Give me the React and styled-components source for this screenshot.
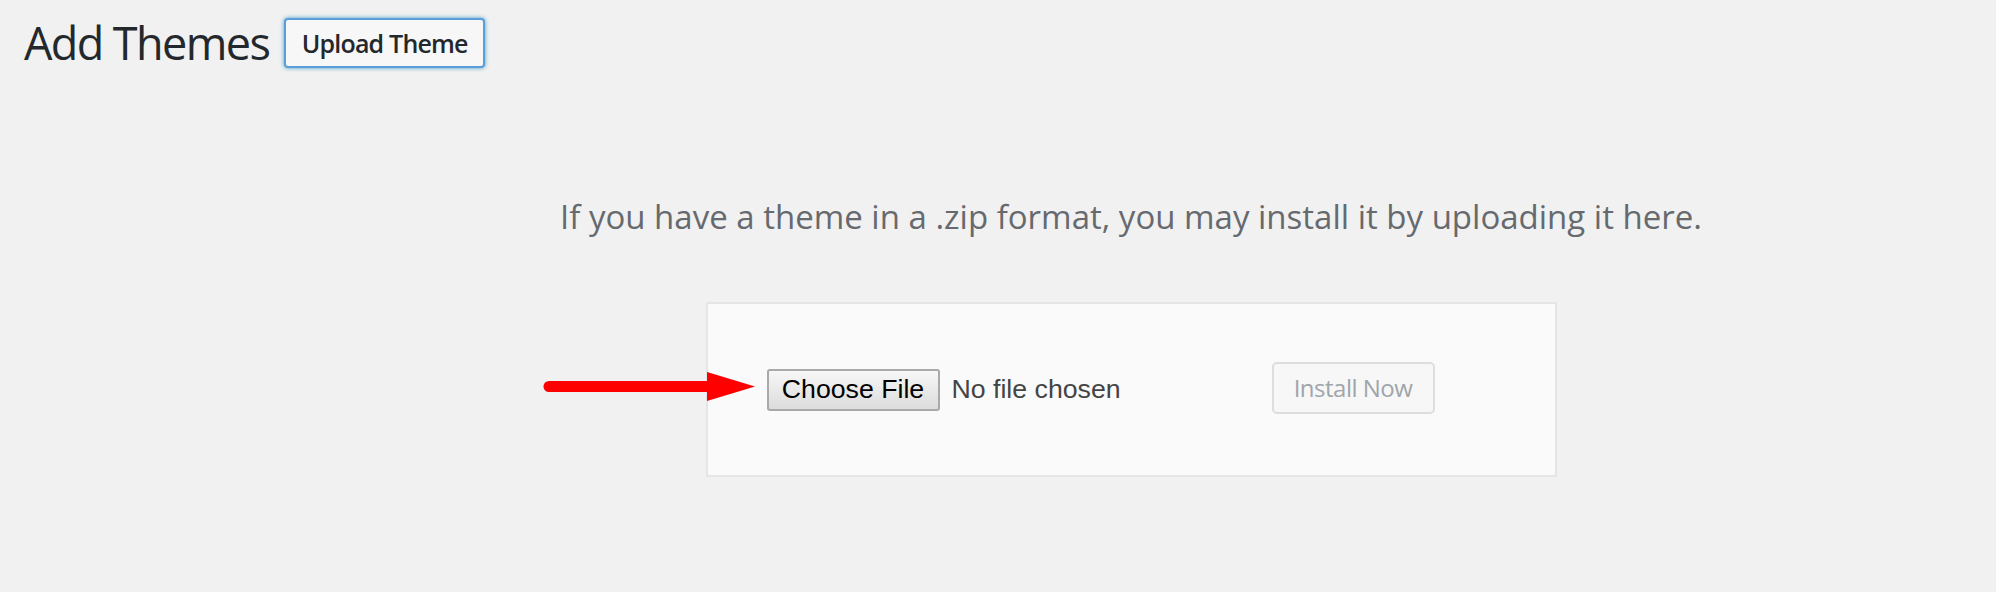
import styled, { createGlobalStyle } from "styled-components";

const GlobalStyle = createGlobalStyle`
  html, body {
    margin: 0;
    padding: 0;
    background: #f1f1f1;
    overflow: hidden;
  }
  body {
    font-family: "Open Sans", "Liberation Sans", sans-serif;
    color: #444;
  }
`;

const Page = styled.div`
  width: 1996px;
  height: 592px;
  overflow: hidden;
`;

const TitleRow = styled.div`
  display: flex;
  align-items: center;
  padding: 12px 0 0 24px;
`;

const Title = styled.h1`
  margin: 0;
  font-size: 45px;
  font-weight: 400;
  line-height: 62px;
  letter-spacing: -1.6px;
  color: #23282d;
`;

const TitleAction = styled.button`
  margin-left: 15px;
  width: 201px;
  height: 50px;
  padding: 0;
  border: 2px solid #5b9dd9;
  border-radius: 4px;
  box-shadow: 0 0 4px rgba(30, 140, 190, 0.8);
  background: #f7f7f7;
  font-family: "Open Sans", sans-serif;
  font-size: 25px;
  font-weight: 600;
  letter-spacing: -0.8px;
  color: #23282d;
  cursor: pointer;
`;

const UploadSection = styled.section`
  width: 2262px;
  display: flex;
  flex-direction: column;
  align-items: center;
`;

const Help = styled.p`
  margin: 121px 0 0;
  font-size: 33px;
  line-height: 44px;
  letter-spacing: 0;
  color: #666a6f;
  text-align: center;
`;

const UploadForm = styled.form`
  position: relative;
  box-sizing: border-box;
  width: 851px;
  height: 175px;
  margin-top: 63px;
  padding: 0 59px;
  display: flex;
  align-items: center;
  background: #fafafa;
  border: 2px solid #e5e5e5;
`;

const FileField = styled.div`
  display: flex;
  align-items: center;
  width: 505px;
`;

const FileButton = styled.button`
  box-sizing: border-box;
  width: 173px;
  height: 42px;
  padding: 0;
  border: 2px solid #a9a9a9;
  border-radius: 3px;
  background: linear-gradient(#f7f7f7, #dcdcdc);
  font-family: "Liberation Sans", Arial, sans-serif;
  font-size: 26.7px;
  color: #000;
`;

const FileName = styled.span`
  margin-left: 12px;
  font-family: "Liberation Sans", Arial, sans-serif;
  font-size: 26.7px;
  color: #444;
`;

const InstallButton = styled.button`
  box-sizing: border-box;
  width: 163px;
  height: 52px;
  margin-top: -4px;
  padding: 0;
  border: 2px solid #ddd;
  border-radius: 5px;
  background: #f7f7f7;
  font-family: "Open Sans", sans-serif;
  font-size: 24px;
  letter-spacing: -0.5px;
  color: #a0a5aa;
`;

const Pointer = styled.svg`
  position: absolute;
  left: -165px;
  top: 68px;
  overflow: visible;
`;

function Arrow() {
  return (
    <Pointer width="213" height="30" viewBox="0 0 213 30">
      <line x1="6" y1="14.5" x2="168" y2="14.5" stroke="#ff0000" strokeWidth="11" strokeLinecap="round" />
      <polygon points="164,0 212,14.5 164,29" fill="#ff0000" />
    </Pointer>
  );
}

export default function App() {
  return (
    <Page>
      <GlobalStyle />
      <TitleRow>
        <Title>Add Themes</Title>
        <TitleAction type="button">Upload Theme</TitleAction>
      </TitleRow>
      <UploadSection>
        <Help>If you have a theme in a .zip format, you may install it by uploading it here.</Help>
        <UploadForm onSubmit={(e) => e.preventDefault()}>
          <Arrow />
          <FileField>
            <FileButton type="button">Choose File</FileButton>
            <FileName>No file chosen</FileName>
          </FileField>
          <InstallButton type="submit" disabled>
            Install Now
          </InstallButton>
        </UploadForm>
      </UploadSection>
    </Page>
  );
}
